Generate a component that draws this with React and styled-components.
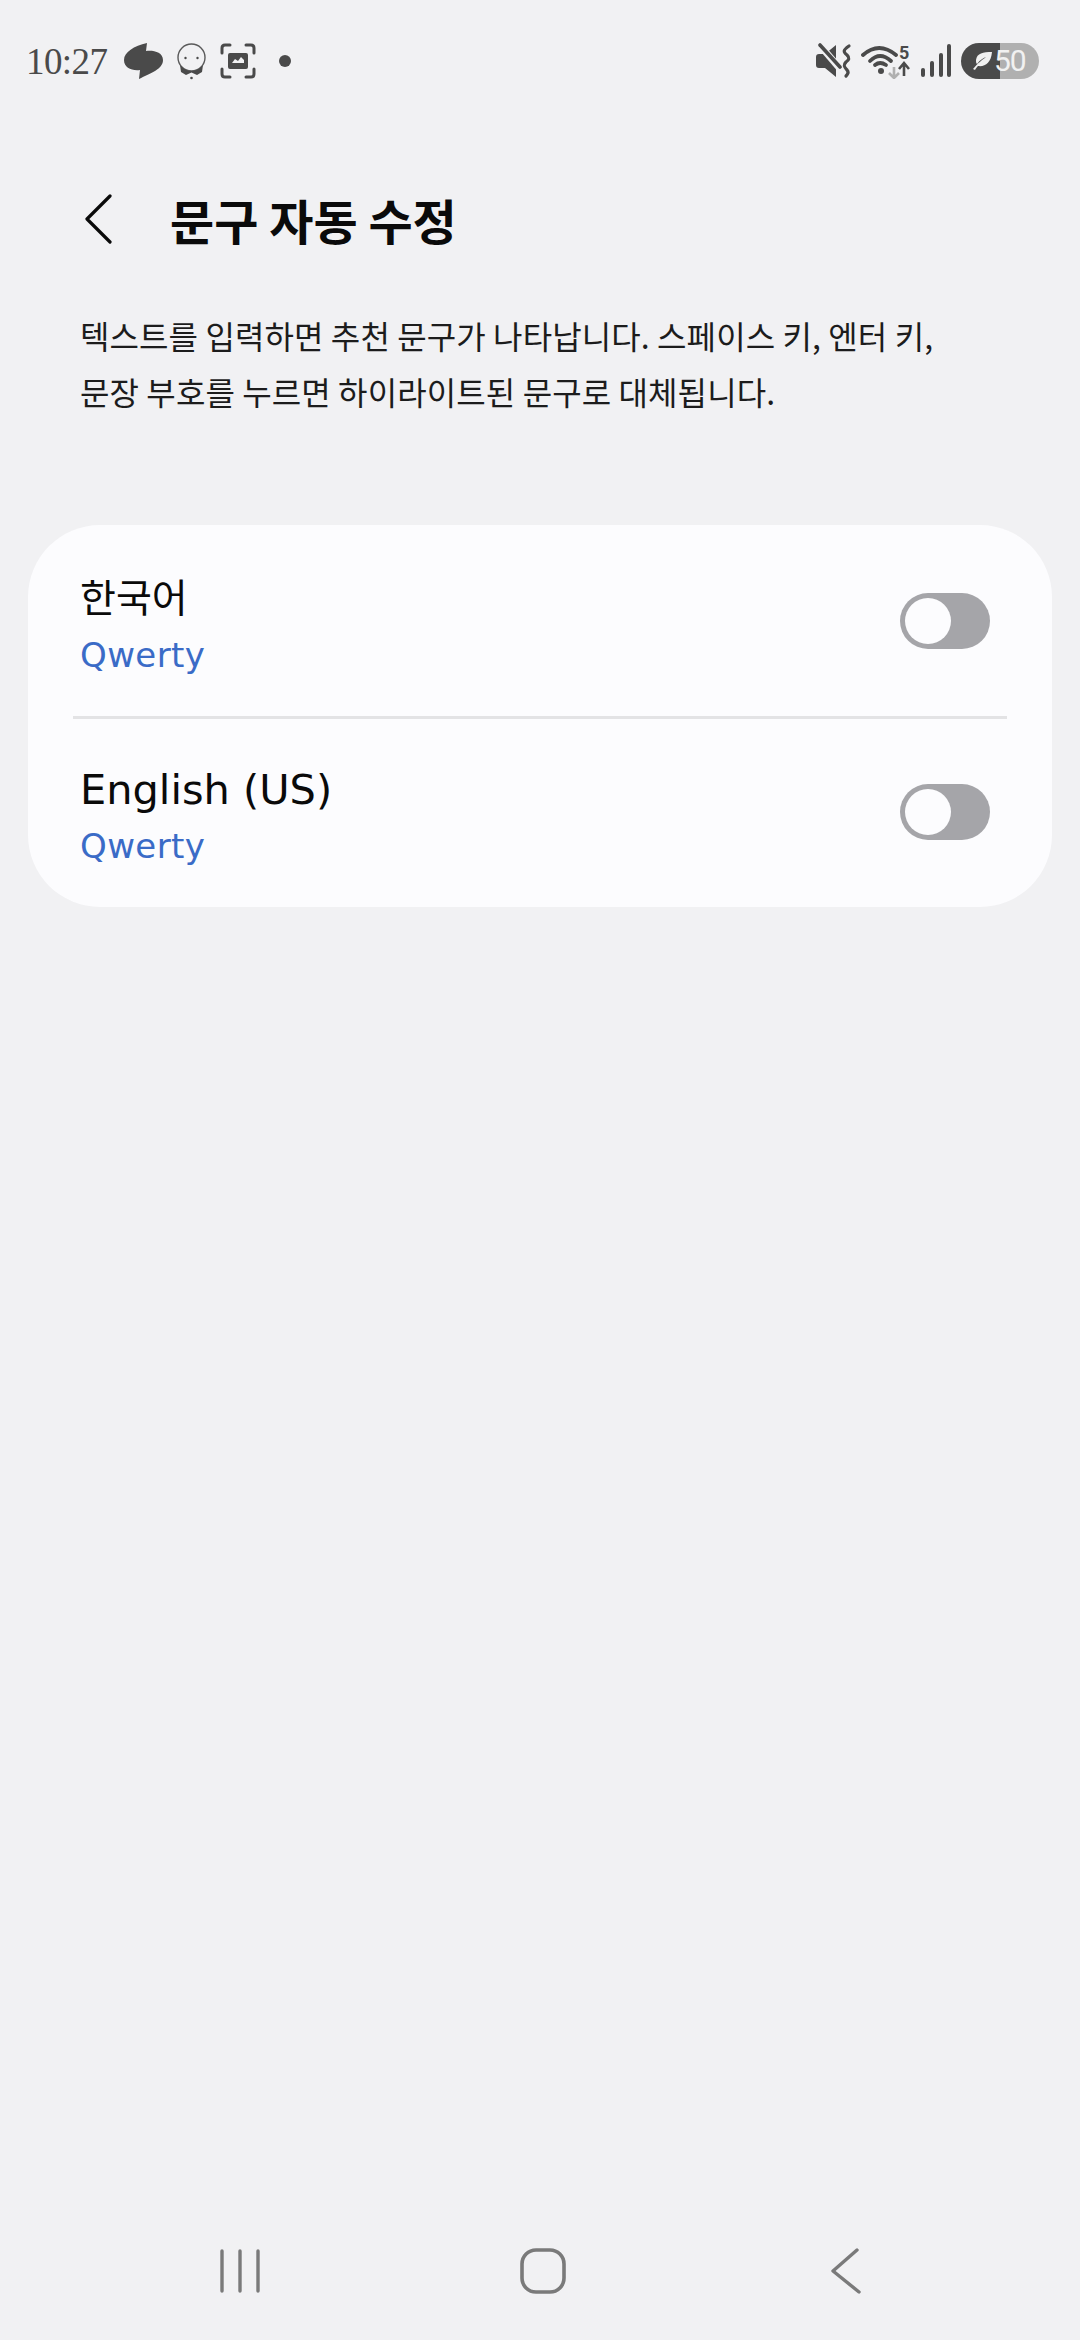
import React from "react";
import styled, { createGlobalStyle } from "styled-components";

const KR = `"Noto Sans CJK KR", "Noto Sans", sans-serif`;

const GlobalStyle = createGlobalStyle`
  html, body {
    margin: 0;
    padding: 0;
    background: #f1f1f3;
  }
`;

const Screen = styled.div`
  width: 1080px;
  height: 2340px;
  display: flex;
  flex-direction: column;
  background: #f1f1f3;
  font-family: ${KR};
  overflow: hidden;
`;

// status bar
const StatusBar = styled.div`
  height: 122px;
  flex-shrink: 0;
  display: flex;
  align-items: center;
  justify-content: space-between;
  padding: 0 41px 0 26px;
`;
const StatusGroup = styled.div`
  display: flex;
  align-items: center;
  gap: ${(props) => props.gap}px;
`;
const Clock = styled.span`
  font-family: "Liberation Serif", serif;
  font-size: 37px;
  letter-spacing: -0.6px;
  color: #4a4a4a;
  width: 85px;
  white-space: nowrap;
`;
const Dot = styled.span`
  width: 12px;
  height: 12px;
  border-radius: 50%;
  background: #4a4a4a;
  margin-left: 10px;
`;
const WifiBox = styled.div`
  position: relative;
  width: 50px;
  height: 36px;
`;
const WifiCount = styled.span`
  position: absolute;
  left: 38px;
  top: 1px;
  font-family: "Roboto", sans-serif;
  font-weight: 700;
  font-size: 18px;
  line-height: 18px;
  color: #4a4a4a;
`;
const Battery = styled.div`
  width: 78px;
  height: 36px;
  border-radius: 18px;
  display: flex;
  align-items: center;
  padding-left: 10px;
  box-sizing: border-box;
  gap: 1px;
  background: linear-gradient(90deg, #4a4a4a 0 39px, #b0b0b0 39px 100%);
`;
const BatteryText = styled.span`
  font-family: "Roboto", sans-serif;
  font-size: 30px;
  line-height: 36px;
  letter-spacing: -1px;
  color: #f1f1f1;
`;

// header
const Header = styled.div`
  display: flex;
  align-items: center;
  height: 76px;
  margin-top: 59px;
  padding-left: 85px;
  gap: 58px;
`;
const Title = styled.h1`
  margin: 0;
  font-size: 48px;
  line-height: 76px;
  font-weight: 700;
  color: #0a0a0a;
`;
const Description = styled.p`
  margin: 50px 0 0;
  padding: 0 80px;
  font-size: 32px;
  letter-spacing: 0.1px;
  line-height: 56px;
  color: #1c1c1c;
  white-space: nowrap;
`;

// card
const Card = styled.div`
  margin: 106px 28px 0;
  background: #fcfcfe;
  border-radius: 72px;
`;
const Row = styled.div`
  height: 191px;
  display: flex;
  align-items: center;
  justify-content: space-between;
  padding: 0 62px 0 52px;
`;
const RowText = styled.div`
  display: flex;
  flex-direction: column;
  padding-top: 5px;
`;
const RowTitle = styled.span`
  font-family: "DejaVu Sans", ${KR};
  font-size: ${(props) => props.size}px;
  line-height: 58px;
  color: #0a0a0a;
`;
const RowSub = styled.span`
  font-family: "DejaVu Sans", ${KR};
  font-size: 34px;
  letter-spacing: 0.4px;
  line-height: 44px;
  margin-top: 5px;
  color: #3a6bc7;
`;
const Divider = styled.div`
  height: 3px;
  margin: 0 45px -3px;
  background: #e3e3e5;
`;
const Toggle = styled.div`
  width: 90px;
  height: 56px;
  border-radius: 28px;
  background: #a5a5a9;
  padding: 5px;
  box-sizing: border-box;
`;
const Knob = styled.div`
  width: 46px;
  height: 46px;
  border-radius: 50%;
  background: #fcfcfe;
`;

// bottom nav
const NavBar = styled.div`
  margin-top: auto;
  height: 138px;
  flex-shrink: 0;
  display: grid;
  grid-template-columns: repeat(3, 303px);
  padding-left: 88px;
`;
const NavSlot = styled.div`
  display: flex;
  align-items: center;
  justify-content: center;
`;

const Blob = () => (
  <svg width="40" height="38" viewBox="0 0 40 38">
    <path
      fill="#4a4a4a"
      d="M23 1 L22 9 C29 8 39 10 39 18 C39 27 27 31 15 37 L16 28 C8 29 0 26 0 18 C0 10 10 4 23 1 Z"
    />
  </svg>
);

const Face = () => (
  <svg width="30" height="37" viewBox="0 0 30 37">
    <circle cx="14.5" cy="14.5" r="13.5" fill="none" stroke="#5a5a5a" strokeWidth="1.4" />
    <circle cx="8.5" cy="15" r="1.2" fill="#4a4a4a" />
    <circle cx="20.5" cy="15" r="1.2" fill="#4a4a4a" />
    <path fill="#4a4a4a" d="M3 22 C7 26 10 28 14.5 28 C19 28 22 26 26 22 L25 29 L20 32 L14.5 29.5 L9 32 L4 29 Z" />
    <circle cx="14.5" cy="35" r="1.3" fill="#4a4a4a" />
  </svg>
);

const ScreenShot = () => (
  <svg width="36" height="36" viewBox="0 0 36 36">
    <path
      fill="none"
      stroke="#4a4a4a"
      strokeWidth="3"
      strokeLinecap="round"
      d="M2 10 V5 Q2 2 5 2 H10 M26 2 H31 Q34 2 34 5 V10 M34 26 V31 Q34 34 31 34 H26 M10 34 H5 Q2 34 2 31 V26"
    />
    <path
      fill="#4a4a4a"
      fillRule="evenodd"
      d="M10 10 H26 Q28 10 28 12 V24 Q28 26 26 26 H10 Q8 26 8 24 V12 Q8 10 10 10 Z M12 20 L15 16 L18 18 L21 14 L24 17 V20 H12 Z"
    />
  </svg>
);

const Mute = () => (
  <svg width="36" height="36" viewBox="0 0 36 36">
    <path fill="#4a4a4a" d="M0 14 Q0 11 3 11 H9 L20 2 V34 L9 25 H3 Q0 25 0 22 Z" />
    <path fill="none" stroke="#f1f1f3" strokeWidth="7" d="M2 0 L26 28" />
    <path fill="none" stroke="#4a4a4a" strokeWidth="3.6" strokeLinecap="round" d="M4 2 L24 24" />
    <path
      fill="none"
      stroke="#4a4a4a"
      strokeWidth="3.2"
      strokeLinecap="round"
      d="M33 3 C27 7 27 9 31 12 C34 15 33 17 30 19 C27 22 28 24 31 27 C33 29 32 31 30 33"
    />
  </svg>
);

const Wifi = () => (
  <WifiBox>
    <svg width="50" height="36" viewBox="0 0 50 36">
      <g fill="none" stroke="#4a4a4a" strokeWidth="3.8" strokeLinecap="round">
        <path d="M2 12 Q18 -2 35 12" />
        <path d="M9 18 Q19 8 30 18" />
        <path d="M14 22 Q19 18 25 22" />
      </g>
      <circle cx="20" cy="28" r="3" fill="#4a4a4a" />
      <path fill="none" stroke="#b0b0b0" strokeWidth="2.6" d="M33 24 V35 M28 30 L33 35 L38 30" />
      <path fill="none" stroke="#4a4a4a" strokeWidth="2.6" d="M43 33 V20 M38 26 L43 20 L48 26" />
    </svg>
    <WifiCount>5</WifiCount>
  </WifiBox>
);

const Signal = () => (
  <svg width="32" height="34" viewBox="0 0 32 34">
    <g fill="none" stroke="#4a4a4a" strokeWidth="4" strokeLinecap="round">
      <path d="M3 26 V31" />
      <path d="M12 19 V31" />
      <path d="M21 11 V31" />
      <path d="M29 2 V31" />
    </g>
  </svg>
);

const Leaf = () => (
  <svg width="22" height="18" viewBox="0 0 22 18">
    <path fill="#f1f1f1" d="M21 0 C12 0 6 1 5 8 C5 10 5 11 6 12 C9 8 12 6 15 5 C11 8 7 11 2 17 L4 18 C5 16 6 15 7 14 C14 15 20 11 21 0 Z" />
  </svg>
);

const Recents = () => (
  <svg width="40" height="44" viewBox="0 0 40 44">
    <path
      fill="none"
      stroke="#7a7a7a"
      strokeWidth="3.4"
      strokeLinecap="round"
      d="M2 2 V42 M20 2 V42 M38 2 V42"
    />
  </svg>
);

const Home = () => (
  <svg width="46" height="46" viewBox="0 0 46 46">
    <rect x="2" y="2" width="42" height="42" rx="14" fill="none" stroke="#7a7a7a" strokeWidth="3.6" />
  </svg>
);

const Back = () => (
  <svg width="30" height="46" viewBox="0 0 30 46">
    <path
      fill="none"
      stroke="#7a7a7a"
      strokeWidth="3.4"
      strokeLinecap="round"
      strokeLinejoin="round"
      d="M26 2 L2 23 L28 44"
    />
  </svg>
);

const Chevron = () => (
  <svg width="27" height="50" viewBox="0 0 27 50">
    <path
      fill="none"
      stroke="#0a0a0a"
      strokeWidth="3.2"
      strokeLinecap="round"
      strokeLinejoin="round"
      d="M25 2 L2 25 L25 48"
    />
  </svg>
);

const languages = [
  { name: "한국어", layout: "Qwerty", size: 39 },
  { name: "English (US)", layout: "Qwerty", size: 41.5 },
];

export default function App() {
  return (
    <Screen>
      <GlobalStyle />
      <StatusBar>
        <StatusGroup gap={13}>
          <Clock>10:27</Clock>
          <Blob />
          <Face />
          <ScreenShot />
          <Dot />
        </StatusGroup>
        <StatusGroup gap={9}>
          <Mute />
          <Wifi />
          <Signal />
          <Battery>
            <Leaf />
            <BatteryText>50</BatteryText>
          </Battery>
        </StatusGroup>
      </StatusBar>

      <Header>
        <Chevron />
        <Title>문구 자동 수정</Title>
      </Header>
      <Description>
        텍스트를 입력하면 추천 문구가 나타납니다. 스페이스 키, 엔터 키,
        <br />
        문장 부호를 누르면 하이라이트된 문구로 대체됩니다.
      </Description>

      <Card>
        {languages.map((lang, i) => (
          <React.Fragment key={lang.name}>
            {i > 0 && <Divider />}
            <Row>
              <RowText>
                <RowTitle size={lang.size}>{lang.name}</RowTitle>
                <RowSub>{lang.layout}</RowSub>
              </RowText>
              <Toggle>
                <Knob />
              </Toggle>
            </Row>
          </React.Fragment>
        ))}
      </Card>

      <NavBar>
        <NavSlot>
          <Recents />
        </NavSlot>
        <NavSlot>
          <Home />
        </NavSlot>
        <NavSlot>
          <Back />
        </NavSlot>
      </NavBar>
    </Screen>
  );
}
